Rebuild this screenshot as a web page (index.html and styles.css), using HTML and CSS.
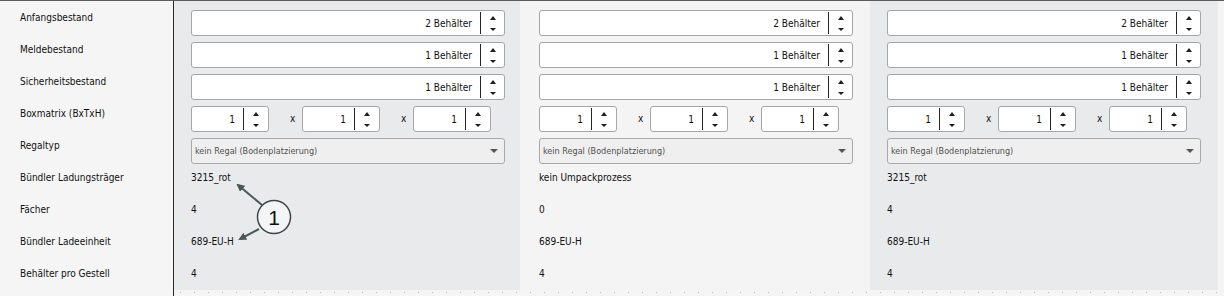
FILE: index.html
```html
<!DOCTYPE html>
<html lang="de">
<head>
  <meta charset="UTF-8" />
  <meta name="viewport" content="width=device-width, initial-scale=1" />
  <title>Bestände</title>
  <link rel="stylesheet" href="styles.css">
</head>
<body>

  <div class="sheet">
    <div class="labels">
      <div class="row">Anfangsbestand</div>
      <div class="row">Meldebestand</div>
      <div class="row">Sicherheitsbestand</div>
      <div class="row">Boxmatrix (BxTxH)</div>
      <div class="row">Regaltyp</div>
      <div class="row">Bündler Ladungsträger</div>
      <div class="row">Fächer</div>
      <div class="row">Bündler Ladeeinheit</div>
      <div class="row">Behälter pro Gestell</div>
    </div>

    <div class="data">
      <div class="cols">

        <div class="col dark w1">
          <div class="row field"><div class="spin"><span class="val">2 Behälter</span><span class="btns"><i class="up"></i><i class="dn"></i></span></div></div>
          <div class="row field"><div class="spin"><span class="val">1 Behälter</span><span class="btns"><i class="up"></i><i class="dn"></i></span></div></div>
          <div class="row field"><div class="spin"><span class="val">1 Behälter</span><span class="btns"><i class="up"></i><i class="dn"></i></span></div></div>
          <div class="row field matrix">
            <div class="spin small"><span class="val">1</span><span class="btns"><i class="up"></i><i class="dn"></i></span></div>
            <span class="x">x</span>
            <div class="spin small"><span class="val">1</span><span class="btns"><i class="up"></i><i class="dn"></i></span></div>
            <span class="x">x</span>
            <div class="spin small"><span class="val">1</span><span class="btns"><i class="up"></i><i class="dn"></i></span></div>
          </div>
          <div class="row field"><div class="combo"><span>kein Regal (Bodenplatzierung)</span><i class="caret"></i></div></div>
          <div class="row value">3215_rot</div>
          <div class="row value">4</div>
          <div class="row value">689-EU-H</div>
          <div class="row value">4</div>
        </div>

        <div class="col light w2">
          <div class="row field"><div class="spin"><span class="val">2 Behälter</span><span class="btns"><i class="up"></i><i class="dn"></i></span></div></div>
          <div class="row field"><div class="spin"><span class="val">1 Behälter</span><span class="btns"><i class="up"></i><i class="dn"></i></span></div></div>
          <div class="row field"><div class="spin"><span class="val">1 Behälter</span><span class="btns"><i class="up"></i><i class="dn"></i></span></div></div>
          <div class="row field matrix">
            <div class="spin small"><span class="val">1</span><span class="btns"><i class="up"></i><i class="dn"></i></span></div>
            <span class="x">x</span>
            <div class="spin small"><span class="val">1</span><span class="btns"><i class="up"></i><i class="dn"></i></span></div>
            <span class="x">x</span>
            <div class="spin small"><span class="val">1</span><span class="btns"><i class="up"></i><i class="dn"></i></span></div>
          </div>
          <div class="row field"><div class="combo"><span>kein Regal (Bodenplatzierung)</span><i class="caret"></i></div></div>
          <div class="row value">kein Umpackprozess</div>
          <div class="row value">0</div>
          <div class="row value">689-EU-H</div>
          <div class="row value">4</div>
        </div>

        <div class="col dark w3">
          <div class="row field"><div class="spin"><span class="val">2 Behälter</span><span class="btns"><i class="up"></i><i class="dn"></i></span></div></div>
          <div class="row field"><div class="spin"><span class="val">1 Behälter</span><span class="btns"><i class="up"></i><i class="dn"></i></span></div></div>
          <div class="row field"><div class="spin"><span class="val">1 Behälter</span><span class="btns"><i class="up"></i><i class="dn"></i></span></div></div>
          <div class="row field matrix">
            <div class="spin small"><span class="val">1</span><span class="btns"><i class="up"></i><i class="dn"></i></span></div>
            <span class="x">x</span>
            <div class="spin small"><span class="val">1</span><span class="btns"><i class="up"></i><i class="dn"></i></span></div>
            <span class="x">x</span>
            <div class="spin small"><span class="val">1</span><span class="btns"><i class="up"></i><i class="dn"></i></span></div>
          </div>
          <div class="row field"><div class="combo"><span>kein Regal (Bodenplatzierung)</span><i class="caret"></i></div></div>
          <div class="row value">3215_rot</div>
          <div class="row value">4</div>
          <div class="row value">689-EU-H</div>
          <div class="row value">4</div>
        </div>

      </div>
      <div class="dots"></div>
    </div>

    <!-- callout marker over the first column -->
    <svg class="callout" width="1224" height="296" viewBox="0 0 1224 296">
      <defs>
        <marker id="tip" markerWidth="8" markerHeight="8" refX="6" refY="4" orient="auto" markerUnits="userSpaceOnUse">
          <path d="M0,0 L8,4 L0,8 Z" fill="#4b5757" />
        </marker>
      </defs>
      <line x1="262" y1="205" x2="238" y2="185" stroke="#4b5757" stroke-width="2" marker-end="url(#tip)" />
      <line x1="259" y1="229" x2="240" y2="239" stroke="#4b5757" stroke-width="2" marker-end="url(#tip)" />
      <circle cx="274" cy="217" r="16.5" fill="#f4f5f7" stroke="#3c4646" stroke-width="1.5" />
      <text x="274" y="224.5" text-anchor="middle" class="num">1</text>
    </svg>
  </div>

</body>
</html>
```

FILE: styles.css
```css
body {
  margin: 0;
  background: #f5f5f5;
  font-family: "DejaVu Sans Condensed", "Liberation Sans", sans-serif;
  font-size: 10px;
  color: #111;
}
.sheet {
  position: relative;
  display: flex;
  height: 296px;
  border-top: 1px solid #5c5c5c;
  box-sizing: border-box;
}
.labels {
  width: 173px;
  border-right: 1px solid #2a2a2a;
  padding-top: 1px;
}
.labels .row {
  padding-left: 20px;
}
.row {
  height: 32px;
  line-height: 32px;
  white-space: nowrap;
}
.data {
  display: flex;
  flex-direction: column;
}
.cols {
  display: flex;
}
.col {
  padding-top: 1px;
  padding-left: 17px;
  box-sizing: border-box;
}
.w1 { width: 346px; }
.w2 { width: 350px; padding-left: 19px; }
.w3 { width: 348px; }
.dark { background: #e9eaec; }
.light { background: #f4f4f4; }

.field {
  padding-top: 8px;
  box-sizing: border-box;
  line-height: normal;
}
.matrix {
  display: flex;
  align-items: flex-start;
}
.x {
  margin: 0 6px 0 21px;
  width: 6px;
  line-height: 26px;
}

.spin {
  display: flex;
  width: 314px;
  height: 26px;
  background: #fff;
  border: 1px solid #a6a6a6;
  border-radius: 3px;
  box-sizing: border-box;
}
.spin.small {
  width: 78px;
}
.val {
  flex: 1;
  text-align: right;
  padding-right: 8px;
  line-height: 25px;
}
.btns {
  width: 24px;
  margin: 1px 0;
  border-left: 1px solid #262626;
  display: flex;
  flex-direction: column;
  align-items: center;
  justify-content: space-between;
  padding: 4px 0 3px;
  box-sizing: border-box;
}
.small .btns {
  width: 25px;
}
.up {
  width: 0;
  height: 0;
  border-left: 3px solid transparent;
  border-right: 3px solid transparent;
  border-bottom: 4px solid #1e1e1e;
}
.dn {
  width: 0;
  height: 0;
  border-left: 3px solid transparent;
  border-right: 3px solid transparent;
  border-top: 3px solid #1e1e1e;
}

.combo {
  display: flex;
  align-items: center;
  justify-content: space-between;
  width: 314px;
  height: 26px;
  padding: 0 6px 0 3px;
  background: #efefef;
  border: 1px solid #a9a9a9;
  border-radius: 3px;
  box-sizing: border-box;
  font-size: 9px;
  color: #505050;
}
.caret {
  width: 0;
  height: 0;
  border-left: 4px solid transparent;
  border-right: 4px solid transparent;
  border-top: 4px solid #555;
}

.dots {
  margin-top: 2px;
  height: 1px;
  width: 1044px;
  background: linear-gradient(to right, #b9b9b9 1px, transparent 1px) 6px 0 / 14px 1px repeat-x;
}

.callout {
  position: absolute;
  left: 0;
  top: -1px;
  pointer-events: none;
}
.callout .num {
  font-family: "Liberation Sans", sans-serif;
  font-size: 21px;
  fill: #111;
}
```
